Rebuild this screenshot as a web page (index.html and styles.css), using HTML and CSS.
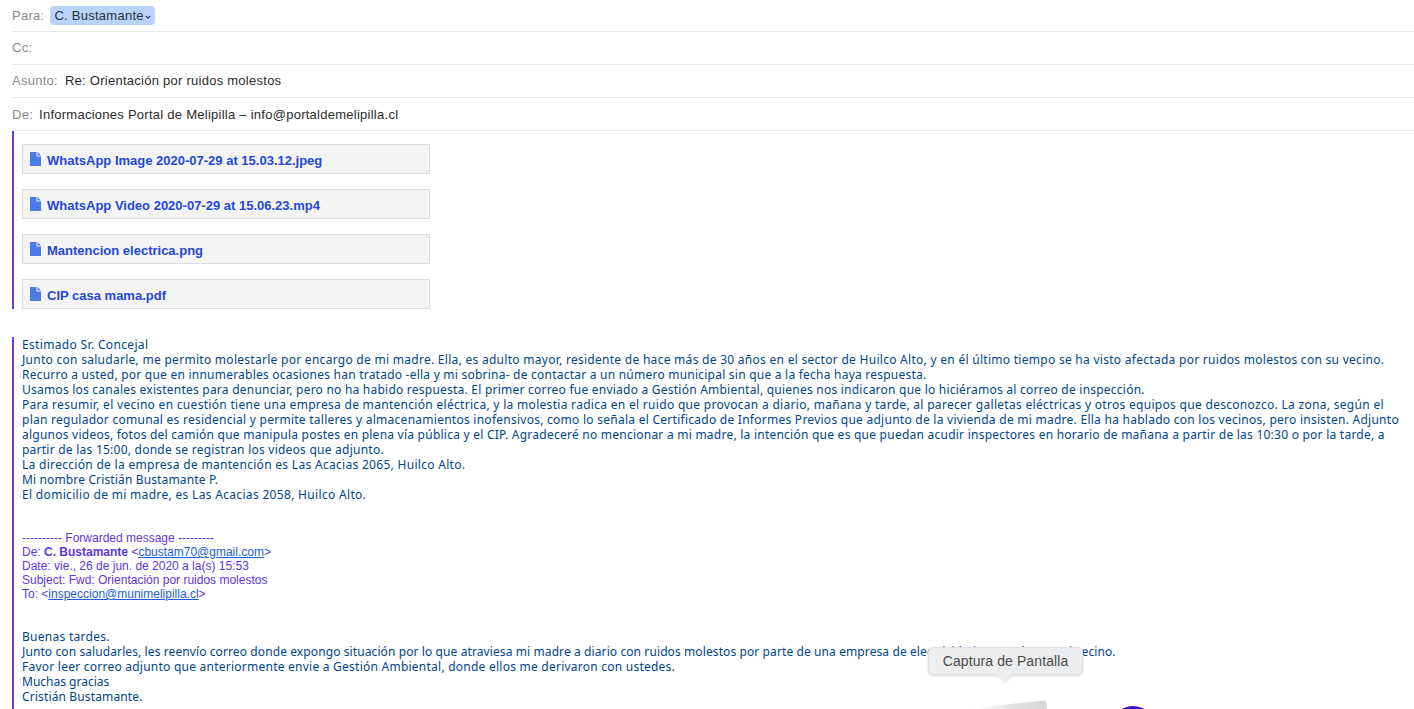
FILE: index.html
```html
<!DOCTYPE html>
<html lang="es">
<head>
<meta charset="utf-8">
<title>Correo</title>
<link rel="stylesheet" href="styles.css">
</head>
<body>
<header class="fields">
  <div class="field field-para"><span class="label">Para:</span><span class="chip">C. Bustamante<svg class="chev" viewBox="0 0 6 4" width="6" height="4"><path d="M.8 1 3 3.2 5.2 1" fill="none" stroke="#33415c" stroke-width="1.1"/></svg></span></div>
  <div class="field field-cc"><span class="label">Cc:</span></div>
  <div class="field field-asunto"><span class="label">Asunto:</span><span class="value">Re: Orientación por ruidos molestos</span></div>
  <div class="field field-de"><span class="label">De:</span><span class="value">Informaciones Portal de Melipilla – info@portaldemelipilla.cl</span></div>
</header>
<main class="quote">
  <ul class="files">
    <li class="file"><svg class="doc" viewBox="0 0 11 14" width="11" height="14"><path d="M0 0h6.5v4.5H11V14H0zM7.5 0 11 3.5H7.5z" fill="#4a7be8"/></svg>WhatsApp Image 2020-07-29 at 15.03.12.jpeg</li>
    <li class="file"><svg class="doc" viewBox="0 0 11 14" width="11" height="14"><path d="M0 0h6.5v4.5H11V14H0zM7.5 0 11 3.5H7.5z" fill="#4a7be8"/></svg>WhatsApp Video 2020-07-29 at 15.06.23.mp4</li>
    <li class="file"><svg class="doc" viewBox="0 0 11 14" width="11" height="14"><path d="M0 0h6.5v4.5H11V14H0zM7.5 0 11 3.5H7.5z" fill="#4a7be8"/></svg>Mantencion electrica.png</li>
    <li class="file"><svg class="doc" viewBox="0 0 11 14" width="11" height="14"><path d="M0 0h6.5v4.5H11V14H0zM7.5 0 11 3.5H7.5z" fill="#4a7be8"/></svg>CIP casa mama.pdf</li>
  </ul>
  <div class="message first">
    <p class="ls-34">Estimado Sr. Concejal</p>
    <p class="ls-28">Junto con saludarle, me permito molestarle por encargo de mi madre. Ella, es adulto mayor, residente de hace más de 30 años en el sector de Huilco Alto, y en él último tiempo se ha visto afectada por ruidos molestos con su vecino.</p>
    <p class="ls-23">Recurro a usted, por que en innumerables ocasiones han tratado -ella y mi sobrina- de contactar a un número municipal sin que a la fecha haya respuesta.</p>
    <p class="ls-23">Usamos los canales existentes para denunciar, pero no ha habido respuesta. El primer correo fue enviado a Gestión Ambiental, quienes nos indicaron que lo hiciéramos al correo de inspección.</p>
    <p class="ls-30">Para resumir, el vecino en cuestión tiene una empresa de mantención eléctrica, y la molestia radica en el ruido que provocan a diario, mañana y tarde, al parecer galletas eléctricas y otros equipos que desconozco. La zona, según el</p>
    <p class="ls-26">plan regulador comunal es residencial y permite talleres y almacenamientos inofensivos, como lo señala el Certificado de Informes Previos que adjunto de la vivienda de mi madre. Ella ha hablado con los vecinos, pero insisten. Adjunto</p>
    <p class="ls-24">algunos videos, fotos del camión que manipula postes en plena vía pública y el CIP. Agradeceré no mencionar a mi madre, la intención que es que puedan acudir inspectores en horario de mañana a partir de las 10:30 o por la tarde, a</p>
    <p class="ls-24">partir de las 15:00, donde se registran los videos que adjunto.</p>
    <p class="ls-30">La dirección de la empresa de mantención es Las Acacias 2065, Huilco Alto.</p>
    <p class="ls-14">Mi nombre Cristián Bustamante P.</p>
    <p class="ls-32">El domicilio de mi madre, es Las Acacias 2058, Huilco Alto.</p>
  </div>
  <div class="forward">
    <p>---------- Forwarded message ---------</p>
    <p>De: <b>C. Bustamante</b> &lt;<a>cbustam70@gmail.com</a>&gt;</p>
    <p>Date: vie., 26 de jun. de 2020 a la(s) 15:53</p>
    <p>Subject: Fwd: Orientación por ruidos molestos</p>
    <p>To: &lt;<a>inspeccion@munimelipilla.cl</a>&gt;</p>
  </div>
  <div class="message second">
    <p class="ls-28">Buenas tardes.</p>
    <p class="ls-10">Junto con saludarles, les reenvío correo donde expongo situación por lo que atraviesa mi madre a diario con ruidos molestos por parte de una empresa de electricidad montada por mi vecino.</p>
    <p class="ls-24">Favor leer correo adjunto que anteriormente envie a Gestión Ambiental, donde ellos me derivaron con ustedes.</p>
    <p class="ls-00">Muchas gracias</p>
    <p class="ls-14">Cristián Bustamante.</p>
  </div>
  <div class="bar-gap"></div>
</main>
<div class="tooltip">Captura de Pantalla</div>
<div class="dock-icon dock-shot"></div>
<div class="dock-icon dock-round"></div>
</body>
</html>
```
FILE: styles.css
```css
* { box-sizing: border-box; }
html, body { margin: 0; padding: 0; height: 709px; overflow: hidden; background: #fff; }
body { font-family: "Liberation Sans", Arial, sans-serif; position: relative; }
p { margin: 0; }

.fields { margin-left: 12px; }
.field { display: flex; align-items: center; gap: 7px; height: 33px; border-bottom: 1px solid #e6e6e6; font-size: 13px; letter-spacing: .26px; color: #2b2b2b; }
.field-para { height: 32px; gap: 6px; }
.field-cc { height: 33px; padding-bottom: 1px; }
.field-asunto { height: 33px; padding-bottom: 2px; }
.field-de { height: 33px; gap: 6px; }
.label { color: #8a8a8a; }
.chip { display: inline-flex; align-items: center; gap: 1px; height: 19px; width: 105px; padding: 0 4px; background: #b9d4fc; border-radius: 4px; color: #2b2f38; white-space: nowrap; }
.chev { margin-top: 2px; flex: none; }

.quote { margin-left: 12px; border-left: 2px solid #6a3fd6; padding-left: 8px; height: 578px; position: relative; }
.files { list-style: none; margin: 0; padding: 13px 0 0; display: flex; flex-direction: column; gap: 15px; }
.file { display: flex; align-items: center; gap: 6px; width: 408px; height: 30px; padding: 2px 0 0 7px; background: #f4f4f4; border: 1px solid #dcdcdc; font-size: 13px; font-weight: 700; color: #2448d8; }
.doc { margin-top: -3px; flex: none; }

.message { font-family: "Noto Sans", sans-serif; font-size: 12px; line-height: 15px; color: #00468c; white-space: nowrap; }
.ls-00 { letter-spacing: 0; }
.ls-10 { letter-spacing: .1px; }
.ls-14 { letter-spacing: .14px; }
.ls-23 { letter-spacing: .23px; }
.ls-24 { letter-spacing: .24px; }
.ls-26 { letter-spacing: .26px; }
.ls-28 { letter-spacing: .28px; }
.ls-30 { letter-spacing: .3px; }
.ls-32 { letter-spacing: .32px; }
.ls-34 { letter-spacing: .34px; }
.first { margin-top: 28px; }
.forward { margin-top: 29px; font-size: 12px; line-height: 14px; color: #5f35e0; white-space: nowrap; }
.forward a { color: #1a5fd8; text-decoration: underline; }
.second { margin-top: 28px; }
.bar-gap { position: absolute; left: -2px; top: 178px; width: 2px; height: 28px; background: #fff; }

.tooltip { position: absolute; left: 928px; top: 647px; width: 155px; height: 28px; background: #ecedef; border: 1px solid #e0e1e4; border-radius: 5px; box-shadow: 0 1px 3px rgba(0,0,0,.14); font-size: 14px; letter-spacing: .1px; color: #4b4b4b; display: flex; align-items: center; justify-content: center; }
.tooltip::after { content: ""; position: absolute; left: 71px; bottom: -6px; width: 10px; height: 10px; background: #ecedef; transform: rotate(45deg); box-shadow: 1px 1px 1px rgba(0,0,0,.06); }
.dock-icon { position: absolute; }
.dock-shot { left: 975px; top: 704px; width: 72px; height: 14px; background: linear-gradient(to right, rgba(220,220,220,0), #e2e2e2 50%, #d6d6d6); border-top-right-radius: 2px; transform: rotate(-6deg); filter: blur(.5px); }
.dock-round { left: 1111px; top: 706px; width: 44px; height: 44px; border-radius: 50%; background: #3a10d0; }
```
